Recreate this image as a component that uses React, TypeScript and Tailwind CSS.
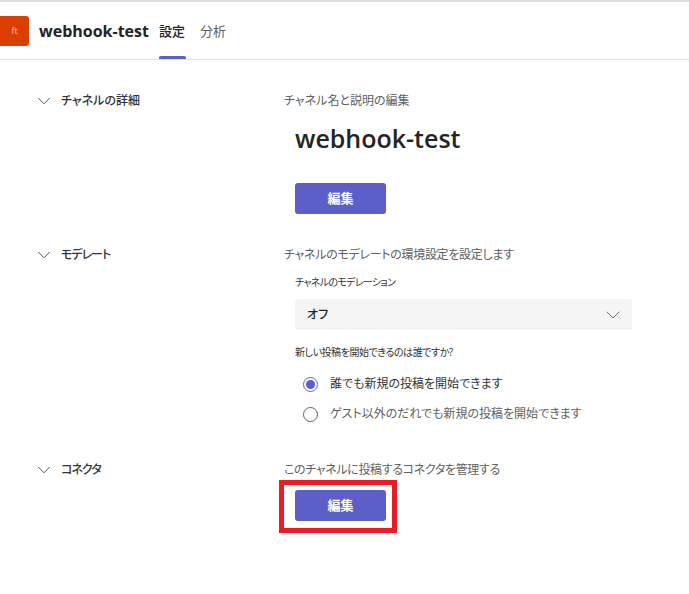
import { ChevronDown } from "lucide-react";

const font = { fontFamily: '"Open Sans", "Noto Sans CJK JP", sans-serif' };

function EditButton() {
  return (
    <button className="w-[91px] h-[31px] rounded-[3px] bg-[#5b5fc7] text-white text-[13px] font-semibold flex items-center justify-center">
      編集
    </button>
  );
}

function SectionLabel({ label, tight }: { label: string; tight?: boolean }) {
  return (
    <div className="w-[284px] pl-[33px] flex items-center h-[20px] shrink-0">
      <ChevronDown size={22} strokeWidth={1} className="text-[#424242]" />
      <span className={"ml-[6px] text-[12px] font-medium text-[#333] " + (tight ? "tracking-[-1px]" : "")}>{label}</span>
    </div>
  );
}

function Radio({ label, checked }: { label: string; checked?: boolean }) {
  return (
    <div className="flex items-center h-[20px]">
      <span
        className={
          "w-[15px] h-[15px] rounded-full border flex items-center justify-center " +
          (checked ? "border-[#5b5fc7]" : "border-[#616161]")
        }
      >
        {checked && <span className="w-[9px] h-[9px] rounded-full bg-[#5b5fc7]" />}
      </span>
      <span className={"ml-[12px] text-[12px] " + (checked ? "text-[#333]" : "text-[#616161]")}>{label}</span>
    </div>
  );
}

export default function App() {
  return (
    <div className="relative w-[689px] h-[594px] bg-white overflow-hidden [font-feature-settings:'palt']" style={font}>
      <div className="h-[2px] bg-[#e0e0e0]" />
      {/* Header */}
      <div className="h-[58px] border-b border-[#e0e0e0] flex items-center">
        <div className="w-[29px] h-[30px] rounded-r-[3px] bg-[#dc3e02] text-[#f6c9b4] text-[9px] flex items-center justify-center">
          ft
        </div>
        <span className="ml-[10px] text-[16px] font-bold text-[#242424]">webhook-test</span>
        <div className="ml-[10px] relative h-full flex items-center pt-[2px] text-[13px] text-[#242424] font-medium">
          設定
          <div className="absolute bottom-0 left-0 w-[27px] h-[3px] rounded-t-[2px] bg-[#5b5fc7]" />
        </div>
        <span className="ml-[15px] pt-[2px] text-[13px] text-[#616161]">分析</span>
      </div>

      {/* Channel details */}
      <div className="flex mt-[31px]">
        <SectionLabel label="チャネルの詳細" />
        <div>
          <div className="h-[20px] flex items-center text-[12px] text-[#616161]">チャネル名と説明の編集</div>
          <div className="pl-[11px]">
            <div className="mt-[10px] text-[25px] leading-[34px] font-semibold text-[#242424]">webhook-test</div>
            <div className="mt-[28px]">
              <EditButton />
            </div>
          </div>
        </div>
      </div>

      {/* Moderation */}
      <div className="flex mt-[31px]">
        <SectionLabel label="モデレート" tight />
        <div>
          <div className="h-[20px] flex items-center text-[12px] tracking-[-0.3px] text-[#616161]">
            チャネルのモデレートの環境設定を設定します
          </div>
          <div className="pl-[11px]">
            <div className="mt-[9px] h-[16px] flex items-center text-[10px] tracking-[-0.7px] text-[#333]">チャネルのモデレーション</div>
            <div className="mt-[9px] w-[337px] h-[31px] rounded-[3px] bg-[#f5f5f5] flex items-center justify-between pl-[12px] pr-[7px]">
              <span className="text-[12px] font-medium text-[#242424]">オフ</span>
              <ChevronDown size={24} strokeWidth={0.9} className="text-[#616161]" />
            </div>
            <div className="mt-[14px] h-[16px] flex items-center text-[10px] tracking-[-0.45px] text-[#333]">
              新しい投稿を開始できるのは誰ですか?
            </div>
            <div className="mt-[14px] pl-[8px] flex flex-col gap-[10px]">
              <Radio label="誰でも新規の投稿を開始できます" checked />
              <Radio label="ゲスト以外のだれでも新規の投稿を開始できます" />
            </div>
          </div>
        </div>
      </div>

      {/* Connectors */}
      <div className="flex mt-[36px]">
        <SectionLabel label="コネクタ" tight />
        <div>
          <div className="h-[20px] flex items-center text-[12px] tracking-[-0.35px] text-[#616161]">
            このチャネルに投稿するコネクタを管理する
          </div>
          <div className="pl-[11px] mt-[10px]">
            <EditButton />
          </div>
        </div>
      </div>

      {/* Red annotation box */}
      <div className="absolute left-[279px] top-[480px] w-[118px] h-[53px] border-[5px] border-[#ed1c24]" />
    </div>
  );
}
